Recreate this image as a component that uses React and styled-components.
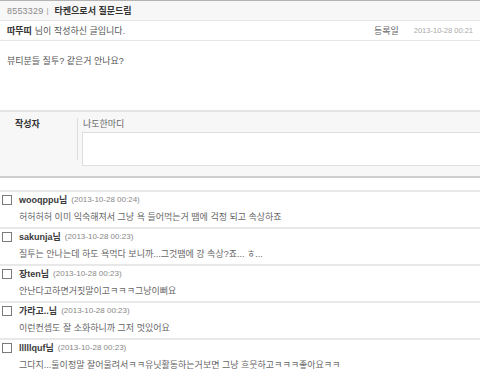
import React from "react";
import styled, { createGlobalStyle } from "styled-components";

const Global = createGlobalStyle`
  html, body { margin: 0; padding: 0; background: #fff; }
  body {
    font-family: "Liberation Sans", "Noto Sans CJK KR", sans-serif;
    font-size: 9px;
    color: #555;
  }
`;

const Page = styled.div`
  width: 480px;
  height: 376px;
  overflow: hidden;
  display: flex;
  flex-direction: column;
`;

const TitleBar = styled.div`
  height: 19px;
  border-top: 1px solid #b4b4b4;
  border-bottom: 1px solid #e6e6e6;
  background: #f7f7f7;
  display: flex;
  align-items: center;
  padding-left: 7px;
`;

const PostNo = styled.span`
  color: #8a8a8a;
  font-size: 9px;
  letter-spacing: 0.2px;
`;

const Bar = styled.span`
  color: #999;
  margin: 0 6px 0 3px;
  font-size: 8px;
`;

const Title = styled.span`
  color: #333;
  font-weight: bold;
  font-size: 9px;
`;

const MetaRow = styled.div`
  height: 19px;
  border-bottom: 1px solid #e6e6e6;
  display: flex;
  align-items: center;
  padding: 0 7px;
`;

const Author = styled.b`
  color: #333;
`;

const MetaText = styled.span`
  color: #555;
  margin-left: 3px;
`;

const Spacer = styled.div`
  flex: 1;
`;

const RegLabel = styled.span`
  color: #666;
  margin-right: 15px;
`;

const RegDate = styled.span`
  color: #aaa;
  font-size: 7.5px;
`;

const Body = styled.div`
  height: 69px;
  padding: 13px 7px 0;
  box-sizing: border-box;
  color: #555;
`;

const WriterBox = styled.div`
  border-top: 2px solid #e4e4e4;
  border-bottom: 2px solid #cfcfcf;
  background: #f7f7f7;
  display: grid;
  grid-template-columns: 77px 1px 1fr;
  padding: 6px 0 10px;
`;

const WriterLabel = styled.div`
  font-weight: bold;
  color: #333;
  padding-left: 15px;
  line-height: 12px;
`;

const Divider = styled.div`
  background: #dcdcdc;
  height: 42px;
`;

const RightCol = styled.div`
  display: flex;
  flex-direction: column;
  margin-left: 4px;
`;

const Hint = styled.div`
  color: #666;
  line-height: 12px;
  margin-bottom: 2px;
  padding-left: 1px;
`;

const TextBox = styled.div`
  height: 32px;
  background: #fff;
  border: 1px solid #dedede;
  border-right: none;
`;

const Comments = styled.div`
  margin-top: 12px;
  display: flex;
  flex-direction: column;
`;

const Comment = styled.div`
  height: 35px;
  border-top: 2px solid #e8e8e8;
  display: flex;
  flex-direction: column;
`;

const NameLine = styled.div`
  height: 14px;
  display: flex;
  align-items: center;
`;

const Check = styled.span`
  width: 8px;
  height: 8px;
  border: 1px solid #7a7a7a;
  background: #fff;
  margin: 2px 7px 0 2px;
  flex: none;
`;

const Name = styled.b`
  color: #3a3a3a;
`;

const CDate = styled.span`
  color: #888;
  font-size: 8px;
  margin-left: 4px;
`;

const CText = styled.div`
  color: #666;
  padding: 2px 0 0 19px;
  line-height: 18px;
  white-space: nowrap;
`;

const comments = [
  { name: "wooqppu님", date: "(2013-10-28 00:24)", text: "허허허허 이미 익숙해져서 그냥 욕 들어먹는거 땜에 걱정 되고 속상하죠" },
  { name: "sakunja님", date: "(2013-10-28 00:23)", text: "질투는 안나는데 하도 욕먹다 보니까...그것땜에 걍 속상?죠... ㅎ..." },
  { name: "장ten님", date: "(2013-10-28 00:23)", text: "안난다고하면거짓말이고ㅋㅋㅋ그냥이뻐요" },
  { name: "가라고..님", date: "(2013-10-28 00:23)", text: "이런컨셉도 잘 소화하니까 그저 멋있어요" },
  { name: "lllllquf님", date: "(2013-10-28 00:23)", text: "그다지...둘이정말 잘어울려서ㅋㅋ유닛활동하는거보면 그냥 흐뭇하고ㅋㅋㅋ좋아요ㅋㅋ" },
];

export default function App() {
  return (
    <Page>
      <Global />
      <TitleBar>
        <PostNo>8553329</PostNo>
        <Bar>|</Bar>
        <Title>타켄으로서 질문드림</Title>
      </TitleBar>
      <MetaRow>
        <Author>따뚜띠</Author>
        <MetaText>님이 작성하신 글입니다.</MetaText>
        <Spacer />
        <RegLabel>등록일</RegLabel>
        <RegDate>2013-10-28 00:21</RegDate>
      </MetaRow>
      <Body>뷰티분들 질투? 같은거 안나요?</Body>
      <WriterBox>
        <WriterLabel>작성자</WriterLabel>
        <Divider />
        <RightCol>
          <Hint>나도한마디</Hint>
          <TextBox />
        </RightCol>
      </WriterBox>
      <Comments>
        {comments.map((c, i) => (
          <Comment key={i}>
            <NameLine>
              <Check />
              <Name>{c.name}</Name>
              <CDate>{c.date}</CDate>
            </NameLine>
            <CText>{c.text}</CText>
          </Comment>
        ))}
      </Comments>
    </Page>
  );
}
